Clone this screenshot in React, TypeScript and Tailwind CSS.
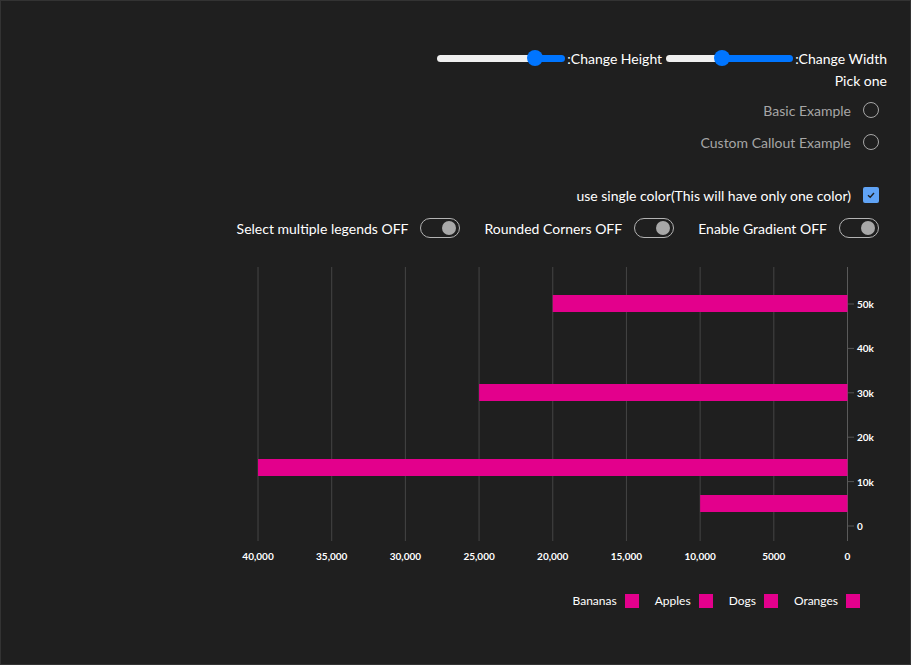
import React from "react";

const font = { fontFamily: "Lato, 'Open Sans', sans-serif" };

function Slider({ width, thumb }: { width: number; thumb: number }) {
	// thumb = distance of thumb centre from track's left edge, in px
	return (
		<div className="relative flex h-[20px] items-center" style={{ width }}>
			<div className="flex h-[7px] w-full overflow-hidden rounded-full">
				<div className="h-full bg-[#efefef]" style={{ width: thumb }} />
				<div className="h-full flex-1 bg-[#0075ff]" />
			</div>
			<div
				className="absolute top-[2px] h-[16px] w-[16px] rounded-full bg-[#0075ff]"
				style={{ left: thumb - 8 }}
			/>
		</div>
	);
}

function Radio({ label }: { label: string }) {
	return (
		<div className="flex h-[20px] items-center gap-3">
			<span className="text-[14px] text-[#a6a6a6]">{label}</span>
			<span className="h-[16px] w-[16px] rounded-full border border-[#a6a6a6]" />
		</div>
	);
}

function Toggle({ label }: { label: string }) {
	return (
		<div className="flex h-[20px] items-center gap-3">
			<span className="text-[14px] text-white">{label}</span>
			<span className="flex h-[20px] w-[40px] items-center justify-end rounded-full border border-[#b3b3b3] pr-[3px]">
				<span className="h-[14px] w-[14px] rounded-full bg-[#a8a8a8]" />
			</span>
		</div>
	);
}

const xTicks = [40000, 35000, 30000, 25000, 20000, 15000, 10000, 5000, 0];
const yTicks = ["50k", "40k", "30k", "20k", "10k", "0"];
const bars = [
	{ value: 20000, y: 295 },
	{ value: 25000, y: 384 },
	{ value: 40000, y: 459 },
	{ value: 10000, y: 495 },
];
const legend = ["Bananas", "Apples", "Dogs", "Oranges"];

const xPos = (v: number) => 847.5 - v * 0.014737;

function Chart() {
	return (
		<svg width={909} height={320} className="block">
			<g transform="translate(-1,-259)" style={font}>
				{xTicks.map((t) => (
					<line
						key={t}
						x1={xPos(t)}
						x2={xPos(t)}
						y1={267}
						y2={541}
						stroke={t === 0 ? "#5a5a5a" : "#454545"}
						strokeWidth={1}
					/>
				))}
				{yTicks.map((t, i) => (
					<g key={t}>
						<line x1={848} x2={854} y1={304 + i * 44.4} y2={304 + i * 44.4} stroke="#555" />
						<text
							x={857}
							y={304 + i * 44.4}
							dominantBaseline="central"
							fill="#ffffff"
							fontSize={10}
							fontWeight={700}
						>
							{t}
						</text>
					</g>
				))}
				{bars.map((b) => (
					<rect
						key={b.y}
						x={xPos(b.value)}
						y={b.y}
						width={847.5 - xPos(b.value)}
						height={17}
						fill="#e3008c"
					/>
				))}
				{xTicks.map((t) => (
					<text
						key={t}
						x={xPos(t)}
						y={556}
						textAnchor="middle"
						dominantBaseline="central"
						fill="#ffffff"
						fontSize={10}
						fontWeight={700}
					>
						{t >= 10000 ? t.toLocaleString("en-US") : t}
					</text>
				))}
			</g>
		</svg>
	);
}

export default function App() {
	return (
		<div className="h-[665px] overflow-hidden border border-[#333333] bg-[#1f1f1f] text-white" style={font}>
			<div className="flex flex-col items-end pr-[23px] pt-[46px]">
				<div className="flex h-[22px] items-center">
					<Slider width={128} thumb={98} />
					<span className="ml-[2px] text-[14px]">:Change Height</span>
					<div className="ml-[4px]">
						<Slider width={127} thumb={56} />
					</div>
					<span className="ml-[2px] text-[14px]">:Change Width</span>
				</div>
				<div className="mt-[2px] h-[20px] text-[14px] leading-[20px]">Pick one</div>
				<div className="mr-[8px] mt-[9px] flex flex-col items-end gap-3">
					<Radio label="Basic Example" />
					<Radio label="Custom Callout Example" />
				</div>
				<div className="mr-[8px] mt-[33px] flex h-[20px] items-center gap-3">
					<span className="text-[14px]">use single color(This will have only one color)</span>
					<span className="flex h-[16px] w-[16px] items-center justify-center rounded-[2px] bg-[#60a3f5]">
						<svg width="10" height="10" viewBox="0 0 10 10">
							<path d="M2 5.2 L4.2 7.2 L8 3" fill="none" stroke="#1f1f1f" strokeWidth="1.4" />
						</svg>
					</span>
				</div>
				<div className="mr-[8px] mt-[13px] flex items-center gap-6">
					<Toggle label="Select multiple legends OFF" />
					<Toggle label="Rounded Corners OFF" />
					<Toggle label="Enable Gradient OFF" />
				</div>
			</div>
			<div className="mt-[21px]">
				<Chart />
			</div>
			<div className="mt-[13px] flex justify-end gap-4 pr-[50px]">
				{legend.map((l) => (
					<div key={l} className="flex items-center gap-2">
						<span className="text-[12px] text-white">{l}</span>
						<span className="h-[14px] w-[14px] bg-[#e3008c]" />
					</div>
				))}
			</div>
		</div>
	);
}
